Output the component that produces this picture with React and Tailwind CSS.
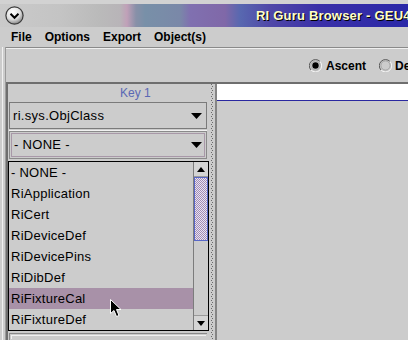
import React from "react";

const items = [
  "- NONE -",
  "RiApplication",
  "RiCert",
  "RiDeviceDef",
  "RiDevicePins",
  "RiDibDef",
  "RiFixtureCal",
  "RiFixtureDef",
];

function DownTri() {
  return (
    <svg width="11" height="6" viewBox="0 0 11 6" className="shrink-0">
      <polygon points="0,0 11,0 5.5,6" fill="#000" />
    </svg>
  );
}

function Radio({ checked }) {
  return (
    <svg width="13" height="13" viewBox="0 0 13 13" className="shrink-0">
      <path d="M11 2.5 A5.5 5.5 0 0 0 2 11" fill="none" stroke="#5a5a5a" strokeWidth="1" />
      <path d="M2 11 A5.5 5.5 0 0 0 11 2.5" fill="none" stroke="#f4f4f4" strokeWidth="1" />
      <circle cx="6.5" cy="6.5" r="4.6" fill="none" stroke="#9a9a9a" strokeWidth="0.8" />
      {checked && <circle cx="6.5" cy="6.5" r="3.2" fill="#000" />}
    </svg>
  );
}

export default function App() {
  return (
    <div className="w-[408px] h-[340px] bg-[#cccccc] overflow-hidden relative font-['Liberation_Sans',Arial,sans-serif] text-black flex flex-col">
      {/* Title bar */}
      <div className="h-[27px] pt-[4px] bg-[#d2d2d2] shrink-0">
        <div className="h-[23px] flex items-center overflow-hidden bg-[linear-gradient(to_right,#cacaca_0px,#c4c4c4_60px,#bababa_100px,#b8b4b8_120px,#c0a0b8_127px,#8890a8_136px,#7890a8_145px,#7a88a8_180px,#8070b0_190px,#8068a8_225px,#5868b0_240px,#5048a8_270px,#3a30a8_320px,#2a28a8_408px)]">
          <svg width="19" height="19" viewBox="0 0 19 19" className="ml-[5px] shrink-0">
            <defs>
              <radialGradient id="g1" cx="0.4" cy="0.3" r="0.7">
                <stop offset="0" stopColor="#ffffff" />
                <stop offset="0.6" stopColor="#e0e0e0" />
                <stop offset="1" stopColor="#8a8a8a" />
              </radialGradient>
            </defs>
            <circle cx="9.5" cy="9.5" r="8.6" fill="url(#g1)" stroke="#3a3a3a" strokeWidth="1.2" />
            <path d="M5.5 7.8 L9.5 11.8 L13.5 7.8" fill="none" stroke="#000" strokeWidth="2" />
          </svg>
          <span className="ml-[232px] shrink-0 whitespace-nowrap text-[13px] font-bold text-[#ffffc8] tracking-[0.2px] [text-shadow:1px_1px_0_#000]">
            RI Guru Browser - GEU410
          </span>
        </div>
      </div>

      {/* Menu bar */}
      <div className="h-[20px] shrink-0 flex items-center pl-[11px] gap-[13px] text-[12px] font-bold">
        <span>File</span>
        <span>Options</span>
        <span>Export</span>
        <span>Object(s)</span>
      </div>

      {/* Body */}
      <div className="flex-1 flex min-h-0">
        {/* window frame */}
        <div className="w-[6px] shrink-0 flex">
          <div className="w-[2px]" />
          <div className="w-[1px] bg-[#f0f0f0]" />
          <div className="w-[2px]" />
          <div className="w-[1px] bg-[#9a9a9a]" />
        </div>

        <div className="flex-1 flex flex-col min-w-0">
          <div className="h-[1px] bg-[#8a8a8a] shrink-0" />
          <div className="h-[1px] bg-[#efefef] shrink-0" />

          {/* toolbar */}
          <div className="h-[33px] shrink-0 flex items-center overflow-hidden pl-[303px] whitespace-nowrap text-[12px] font-bold">
            <Radio checked />
            <span className="ml-[4px] shrink-0">Ascent</span>
            <span className="ml-[13px] shrink-0 flex items-center">
              <Radio />
            </span>
            <span className="ml-[3px] shrink-0">Descent</span>
          </div>

          {/* main split */}
          <div className="flex-1 flex border-t-2 border-l-2 border-[#6e6e6e] min-h-0">
            {/* left panel */}
            <div className="w-[201px] shrink-0 flex flex-col">
              <div className="h-[18px] shrink-0 flex items-center pl-[112px] text-[12px] text-[#5a68b4]">
                Key 1
              </div>
              <div className="ml-[1px] w-[198px] h-[27px] shrink-0 border border-[#7a7a7a] flex items-center justify-between pl-[3px] pr-[4px] text-[13px] tracking-[0.3px]">
                <span>ri.sys.ObjClass</span>
                <DownTri />
              </div>
              <div className="h-[2px] shrink-0 ml-[1px] w-[198px] border-b border-[#f2f2f2]" />
              <div className="ml-[1px] w-[198px] h-[28px] shrink-0 border border-[#8a8a8a] p-[1px]">
                <div className="h-full border border-[#a898a8] flex items-center justify-between pl-[2px] pr-[2px] text-[13px] tracking-[0.3px]">
                  <span>- NONE -</span>
                  <DownTri />
                </div>
              </div>
              <div className="h-[2px] shrink-0" />
              {/* list */}
              <div className="h-[170px] shrink-0 border border-black flex">
                <div className="flex-1 flex flex-col">
                  {items.map((t, i) => (
                    <div
                      key={t}
                      className={
                        "h-[21px] shrink-0 flex items-center pl-[2px] text-[13px] tracking-[0.25px] " +
                        (i === 6 ? "bg-[#a891a8]" : "")
                      }
                    >
                      {t}
                    </div>
                  ))}
                </div>
                {/* scrollbar */}
                <div className="w-[15px] shrink-0 border-l border-[#7c7c7c] flex flex-col">
                  <div className="h-[15px] shrink-0 border-b border-[#9a9a9a] bg-[#d4d4d4] flex items-center justify-center">
                    <svg width="8" height="5" viewBox="0 0 8 5">
                      <polygon points="0,5 8,5 4,0" fill="#000" />
                    </svg>
                  </div>
                  <div className="h-[64px] shrink-0 border border-[#5868c8] bg-[conic-gradient(#a28cb4_25%,#e8e4f4_0_50%,#a28cb4_0_75%,#e8e4f4_0)] bg-[length:2px_2px]" />
                  <div className="flex-1" />
                  <div className="h-[15px] shrink-0 border-t border-[#9a9a9a] bg-[#d4d4d4] flex items-center justify-center">
                    <svg width="8" height="5" viewBox="0 0 8 5">
                      <polygon points="0,0 8,0 4,5" fill="#000" />
                    </svg>
                  </div>
                </div>
              </div>
              <div className="h-[2px] shrink-0" />
              <div className="ml-[1px] w-[198px] flex-1 border-t border-l border-[#8a8a8a] p-[1px]">
                <div className="h-full border-t border-l border-[#f0f0f0]" />
              </div>
            </div>

            {/* splitter */}
            <div className="w-[6px] shrink-0 flex pl-[2px]">
              <div className="w-[1px] bg-[repeating-linear-gradient(to_bottom,#6a6a6a_0px,#6a6a6a_1px,transparent_1px,transparent_4px)]" />
              <div className="w-[1px] bg-[repeating-linear-gradient(to_bottom,transparent_0px,transparent_2px,#6a6a6a_2px,#6a6a6a_3px,transparent_3px,transparent_4px)]" />
            </div>
            <div className="w-[2px] shrink-0 bg-[#858585]" />

            {/* right panel */}
            <div className="flex-1 flex flex-col min-w-0">
              <div className="h-[17px] shrink-0 bg-white border-b border-[#2a28a0]" />
            </div>
          </div>
        </div>
      </div>

      {/* mouse cursor */}
      <svg
        width="14"
        height="20"
        viewBox="0 0 14 20"
        className="absolute left-[110px] top-[299px]"
      >
        <polygon
          points="0.5,0.5 0.5,14.5 4,11.5 6.5,17.5 9,16.5 6.5,10.5 11,10.5"
          fill="#000"
          stroke="#fff"
          strokeWidth="1"
        />
      </svg>
    </div>
  );
}
